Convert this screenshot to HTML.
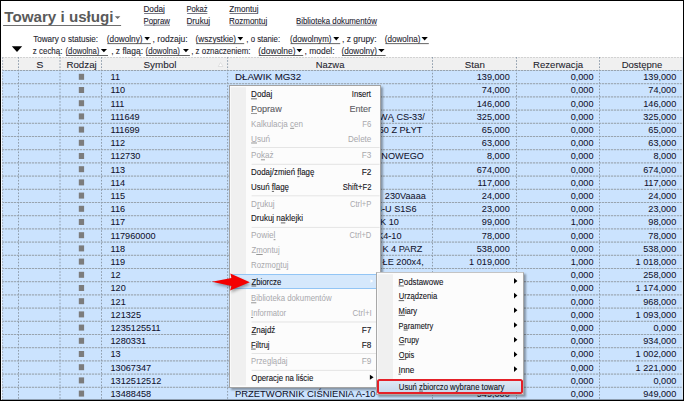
<!DOCTYPE html>
<html><head><meta charset="utf-8"><style>
html,body{margin:0;padding:0;}
body{width:684px;height:401px;overflow:hidden;position:relative;background:#fff;font-family:"Liberation Sans",sans-serif;}
.r{position:absolute;}
svg{overflow:visible}
</style></head><body>
<svg class="r" style="left:0;top:0" width="684" height="401" font-family="Liberation Sans, sans-serif"><text transform="translate(4.25,21.80) scale(0.9861,1)" font-size="15.40" fill="#5a5a5a" font-weight="bold">Towary i usługi</text><polygon points="114.8,16.2 120.4,16.2 117.6,19.0" fill="#6a6a6a"/><rect x="3.10" y="25.00" width="118.00" height="1.00" fill="#6e6e6e"/><text transform="translate(143.44,11.80) scale(0.9922,1)" font-size="8.30" fill="#1c1c30" stroke="#1c1c30" stroke-width="0.10">Dodaj</text><rect x="144.10" y="13.00" width="20.30" height="0.90" fill="#6a6a78"/><text transform="translate(143.47,23.50) scale(0.9413,1)" font-size="8.30" fill="#1c1c30" stroke="#1c1c30" stroke-width="0.10">Popraw</text><rect x="144.10" y="24.70" width="25.90" height="0.90" fill="#6a6a78"/><text transform="translate(186.49,11.80) scale(0.9184,1)" font-size="8.30" fill="#1c1c30" stroke="#1c1c30" stroke-width="0.10">Pokaż</text><rect x="187.10" y="13.00" width="20.20" height="0.90" fill="#6a6a78"/><text transform="translate(186.44,23.50) scale(0.9876,1)" font-size="8.30" fill="#1c1c30" stroke="#1c1c30" stroke-width="0.10">Drukuj</text><rect x="187.10" y="24.70" width="22.50" height="0.90" fill="#6a6a78"/><text transform="translate(229.36,11.80) scale(0.9735,1)" font-size="8.30" fill="#1c1c30" stroke="#1c1c30" stroke-width="0.10">Zmontuj</text><rect x="229.60" y="13.00" width="28.40" height="0.90" fill="#6a6a78"/><text transform="translate(228.96,23.50) scale(0.9670,1)" font-size="8.30" fill="#1c1c30" stroke="#1c1c30" stroke-width="0.10">Rozmontuj</text><rect x="229.60" y="24.70" width="37.20" height="0.90" fill="#6a6a78"/><text transform="translate(295.97,23.50) scale(0.9492,1)" font-size="8.30" fill="#1c1c30" stroke="#1c1c30" stroke-width="0.10">Biblioteka dokumentów</text><rect x="296.60" y="24.70" width="80.40" height="0.90" fill="#6a6a78"/><polygon points="11.8,46.2 22.2,46.2 17.0,51.9" fill="#000"/><text transform="translate(33.14,41.70) scale(0.9908,1)" font-size="8.20" fill="#262630" stroke="#262630" stroke-width="0.10">Towary o statusie:</text><text transform="translate(106.81,41.70) scale(1.0052,1)" font-size="8.20" fill="#262630" stroke="#262630" stroke-width="0.10">(dowolny)</text><polygon points="144.40,37.10 149.90,37.10 147.15,40.40" fill="#000"/><rect x="107.30" y="43.20" width="43.60" height="0.90" fill="#555"/><text transform="translate(152.53,41.70) scale(1.0457,1)" font-size="8.20" fill="#262630" stroke="#262630" stroke-width="0.10">, rodzaju:</text><text transform="translate(195.61,41.70)" font-size="8.20" fill="#262630" stroke="#262630" stroke-width="0.10">(wszystkie)</text><polygon points="237.50,37.10 243.20,37.10 240.35,40.40" fill="#000"/><rect x="196.10" y="43.20" width="48.10" height="0.90" fill="#555"/><text transform="translate(246.30,41.70) scale(0.9510,1)" font-size="8.20" fill="#262630" stroke="#262630" stroke-width="0.10">, o stanie:</text><text transform="translate(290.02,41.70) scale(0.9790,1)" font-size="8.20" fill="#262630" stroke="#262630" stroke-width="0.10">(dowolnym)</text><polygon points="333.30,37.10 339.20,37.10 336.25,40.40" fill="#000"/><rect x="290.50" y="43.20" width="49.70" height="0.90" fill="#555"/><text transform="translate(341.94,41.70) scale(1.0302,1)" font-size="8.20" fill="#262630" stroke="#262630" stroke-width="0.10">, z grupy:</text><text transform="translate(384.81,41.70) scale(0.9882,1)" font-size="8.20" fill="#262630" stroke="#262630" stroke-width="0.10">(dowolna)</text><polygon points="421.50,37.10 427.80,37.10 424.65,40.40" fill="#000"/><rect x="385.30" y="43.20" width="43.50" height="0.90" fill="#555"/><text transform="translate(32.78,53.60) scale(0.9715,1)" font-size="8.20" fill="#262630" stroke="#262630" stroke-width="0.10">z cechą:</text><text transform="translate(65.54,53.60) scale(0.9425,1)" font-size="8.20" fill="#262630" stroke="#262630" stroke-width="0.10">(dowolna)</text><polygon points="100.80,49.00 107.00,49.00 103.90,52.30" fill="#000"/><rect x="66.00" y="55.10" width="42.00" height="0.90" fill="#555"/><text transform="translate(111.14,53.60) scale(1.0312,1)" font-size="8.20" fill="#262630" stroke="#262630" stroke-width="0.10">, z flagą:</text><text transform="translate(145.53,53.60) scale(0.9539,1)" font-size="8.20" fill="#262630" stroke="#262630" stroke-width="0.10">(dowolna)</text><polygon points="183.00,49.00 188.90,49.00 185.95,52.30" fill="#000"/><rect x="146.00" y="55.10" width="43.90" height="0.90" fill="#555"/><text transform="translate(191.19,53.60) scale(0.9663,1)" font-size="8.20" fill="#262630" stroke="#262630" stroke-width="0.10">, z oznaczeniem:</text><text transform="translate(258.29,53.60) scale(1.0339,1)" font-size="8.20" fill="#262630" stroke="#262630" stroke-width="0.10">(dowolne)</text><polygon points="296.50,49.00 302.20,49.00 299.35,52.30" fill="#000"/><rect x="258.80" y="55.10" width="44.40" height="0.90" fill="#555"/><text transform="translate(304.54,53.60) scale(1.0298,1)" font-size="8.20" fill="#262630" stroke="#262630" stroke-width="0.10">, model:</text><text transform="translate(341.51,53.60) scale(0.9965,1)" font-size="8.20" fill="#262630" stroke="#262630" stroke-width="0.10">(dowolny)</text><polygon points="378.20,49.00 384.60,49.00 381.40,52.30" fill="#000"/><rect x="342.00" y="55.10" width="43.60" height="0.90" fill="#555"/><rect x="1.60" y="57.00" width="681.40" height="13.50" fill="#f0f0f0"/><rect x="1.60" y="70.50" width="681.40" height="330.00" fill="#cbe3fe"/><line x1="2" y1="57.5" x2="683" y2="57.5" stroke="#d2d2d2" stroke-dasharray="2 1"/><line x1="2" y1="70.50" x2="683" y2="70.50" stroke="#c0d3e6"/><line x1="2" y1="70.50" x2="683" y2="70.50" stroke="#98a4b0" stroke-dasharray="2 1"/><line x1="2" y1="83.70" x2="683" y2="83.70" stroke="#c0d3e6"/><line x1="2" y1="83.70" x2="683" y2="83.70" stroke="#98a4b0" stroke-dasharray="2 1"/><line x1="2" y1="96.90" x2="683" y2="96.90" stroke="#c0d3e6"/><line x1="2" y1="96.90" x2="683" y2="96.90" stroke="#98a4b0" stroke-dasharray="2 1"/><line x1="2" y1="110.10" x2="683" y2="110.10" stroke="#c0d3e6"/><line x1="2" y1="110.10" x2="683" y2="110.10" stroke="#98a4b0" stroke-dasharray="2 1"/><line x1="2" y1="123.30" x2="683" y2="123.30" stroke="#c0d3e6"/><line x1="2" y1="123.30" x2="683" y2="123.30" stroke="#98a4b0" stroke-dasharray="2 1"/><line x1="2" y1="136.50" x2="683" y2="136.50" stroke="#c0d3e6"/><line x1="2" y1="136.50" x2="683" y2="136.50" stroke="#98a4b0" stroke-dasharray="2 1"/><line x1="2" y1="149.70" x2="683" y2="149.70" stroke="#c0d3e6"/><line x1="2" y1="149.70" x2="683" y2="149.70" stroke="#98a4b0" stroke-dasharray="2 1"/><line x1="2" y1="162.90" x2="683" y2="162.90" stroke="#c0d3e6"/><line x1="2" y1="162.90" x2="683" y2="162.90" stroke="#98a4b0" stroke-dasharray="2 1"/><line x1="2" y1="176.10" x2="683" y2="176.10" stroke="#c0d3e6"/><line x1="2" y1="176.10" x2="683" y2="176.10" stroke="#98a4b0" stroke-dasharray="2 1"/><line x1="2" y1="189.30" x2="683" y2="189.30" stroke="#c0d3e6"/><line x1="2" y1="189.30" x2="683" y2="189.30" stroke="#98a4b0" stroke-dasharray="2 1"/><line x1="2" y1="202.50" x2="683" y2="202.50" stroke="#c0d3e6"/><line x1="2" y1="202.50" x2="683" y2="202.50" stroke="#98a4b0" stroke-dasharray="2 1"/><line x1="2" y1="215.70" x2="683" y2="215.70" stroke="#c0d3e6"/><line x1="2" y1="215.70" x2="683" y2="215.70" stroke="#98a4b0" stroke-dasharray="2 1"/><line x1="2" y1="228.90" x2="683" y2="228.90" stroke="#c0d3e6"/><line x1="2" y1="228.90" x2="683" y2="228.90" stroke="#98a4b0" stroke-dasharray="2 1"/><line x1="2" y1="242.10" x2="683" y2="242.10" stroke="#c0d3e6"/><line x1="2" y1="242.10" x2="683" y2="242.10" stroke="#98a4b0" stroke-dasharray="2 1"/><line x1="2" y1="255.30" x2="683" y2="255.30" stroke="#c0d3e6"/><line x1="2" y1="255.30" x2="683" y2="255.30" stroke="#98a4b0" stroke-dasharray="2 1"/><line x1="2" y1="268.50" x2="683" y2="268.50" stroke="#c0d3e6"/><line x1="2" y1="268.50" x2="683" y2="268.50" stroke="#98a4b0" stroke-dasharray="2 1"/><line x1="2" y1="281.70" x2="683" y2="281.70" stroke="#c0d3e6"/><line x1="2" y1="281.70" x2="683" y2="281.70" stroke="#98a4b0" stroke-dasharray="2 1"/><line x1="2" y1="294.90" x2="683" y2="294.90" stroke="#c0d3e6"/><line x1="2" y1="294.90" x2="683" y2="294.90" stroke="#98a4b0" stroke-dasharray="2 1"/><line x1="2" y1="308.10" x2="683" y2="308.10" stroke="#c0d3e6"/><line x1="2" y1="308.10" x2="683" y2="308.10" stroke="#98a4b0" stroke-dasharray="2 1"/><line x1="2" y1="321.30" x2="683" y2="321.30" stroke="#c0d3e6"/><line x1="2" y1="321.30" x2="683" y2="321.30" stroke="#98a4b0" stroke-dasharray="2 1"/><line x1="2" y1="334.50" x2="683" y2="334.50" stroke="#c0d3e6"/><line x1="2" y1="334.50" x2="683" y2="334.50" stroke="#98a4b0" stroke-dasharray="2 1"/><line x1="2" y1="347.70" x2="683" y2="347.70" stroke="#c0d3e6"/><line x1="2" y1="347.70" x2="683" y2="347.70" stroke="#98a4b0" stroke-dasharray="2 1"/><line x1="2" y1="360.90" x2="683" y2="360.90" stroke="#c0d3e6"/><line x1="2" y1="360.90" x2="683" y2="360.90" stroke="#98a4b0" stroke-dasharray="2 1"/><line x1="2" y1="374.10" x2="683" y2="374.10" stroke="#c0d3e6"/><line x1="2" y1="374.10" x2="683" y2="374.10" stroke="#98a4b0" stroke-dasharray="2 1"/><line x1="2" y1="387.30" x2="683" y2="387.30" stroke="#c0d3e6"/><line x1="2" y1="387.30" x2="683" y2="387.30" stroke="#98a4b0" stroke-dasharray="2 1"/><line x1="2" y1="400.50" x2="683" y2="400.50" stroke="#c0d3e6"/><line x1="2" y1="400.50" x2="683" y2="400.50" stroke="#98a4b0" stroke-dasharray="2 1"/><line x1="18.50" y1="57" x2="18.50" y2="401" stroke="#8e9cab" stroke-dasharray="1.6 1.55"/><line x1="60.00" y1="57" x2="60.00" y2="401" stroke="#8e9cab" stroke-dasharray="1.6 1.55"/><line x1="101.50" y1="57" x2="101.50" y2="401" stroke="#8e9cab" stroke-dasharray="1.6 1.55"/><line x1="227.60" y1="57" x2="227.60" y2="401" stroke="#8e9cab" stroke-dasharray="1.6 1.55"/><line x1="432.50" y1="57" x2="432.50" y2="401" stroke="#8e9cab" stroke-dasharray="1.6 1.55"/><line x1="516.50" y1="57" x2="516.50" y2="401" stroke="#8e9cab" stroke-dasharray="1.6 1.55"/><line x1="599.50" y1="57" x2="599.50" y2="401" stroke="#8e9cab" stroke-dasharray="1.6 1.55"/><line x1="2.6" y1="57" x2="2.6" y2="401" stroke="#b0b8c4" stroke-dasharray="2 1"/><line x1="682.3" y1="57" x2="682.3" y2="401" stroke="#e0e8f0"/><text transform="translate(36.31,67.60) scale(1.1003,1)" font-size="9.80" fill="#1e1e2e" stroke="#1e1e2e" stroke-width="0.08">S</text><text transform="translate(66.42,67.60) scale(0.9946,1)" font-size="9.80" fill="#1e1e2e" stroke="#1e1e2e" stroke-width="0.08">Rodzaj</text><text transform="translate(143.45,67.60) scale(1.0109,1)" font-size="9.80" fill="#1e1e2e" stroke="#1e1e2e" stroke-width="0.08">Symbol</text><text transform="translate(315.65,67.60) scale(0.9604,1)" font-size="9.80" fill="#1e1e2e" stroke="#1e1e2e" stroke-width="0.08">Nazwa</text><text transform="translate(464.76,67.60) scale(0.9968,1)" font-size="9.80" fill="#1e1e2e" stroke="#1e1e2e" stroke-width="0.08">Stan</text><text transform="translate(533.03,67.60) scale(0.9798,1)" font-size="9.80" fill="#1e1e2e" stroke="#1e1e2e" stroke-width="0.08">Rezerwacja</text><text transform="translate(621.64,67.60) scale(0.9725,1)" font-size="9.80" fill="#1e1e2e" stroke="#1e1e2e" stroke-width="0.08">Dostępne</text><polygon points="218.3,66.5 222.9,66.5 220.6,62.6" fill="#fff" stroke="#c8c8c8" stroke-width="0.5"/><rect x="78.80" y="73.80" width="5.30" height="6.00" fill="#7c7c7c"/><text transform="translate(110.51,80.20) scale(0.9337,1)" font-size="9.80" fill="#10102a" stroke="#10102a" stroke-width="0.04">11</text><text transform="translate(234.92,80.20) scale(0.9967,1)" font-size="9.80" fill="#10102a" stroke="#10102a" stroke-width="0.04">DŁAWIK MG32</text><text transform="translate(476.74,80.20) scale(0.9337,1)" font-size="9.80" fill="#10102a" stroke="#10102a" stroke-width="0.04">139,000</text><text transform="translate(570.65,80.20) scale(0.9337,1)" font-size="9.80" fill="#10102a" stroke="#10102a" stroke-width="0.04">0,000</text><text transform="translate(643.24,80.20) scale(0.9337,1)" font-size="9.80" fill="#10102a" stroke="#10102a" stroke-width="0.04">139,000</text><rect x="78.80" y="87.00" width="5.30" height="6.00" fill="#7c7c7c"/><text transform="translate(110.51,93.40) scale(0.9337,1)" font-size="9.80" fill="#10102a" stroke="#10102a" stroke-width="0.04">110</text><text transform="translate(481.82,93.40) scale(0.9337,1)" font-size="9.80" fill="#10102a" stroke="#10102a" stroke-width="0.04">74,000</text><text transform="translate(570.65,93.40) scale(0.9337,1)" font-size="9.80" fill="#10102a" stroke="#10102a" stroke-width="0.04">0,000</text><text transform="translate(648.32,93.40) scale(0.9337,1)" font-size="9.80" fill="#10102a" stroke="#10102a" stroke-width="0.04">74,000</text><rect x="78.80" y="100.20" width="5.30" height="6.00" fill="#7c7c7c"/><text transform="translate(110.51,106.60) scale(0.9337,1)" font-size="9.80" fill="#10102a" stroke="#10102a" stroke-width="0.04">111</text><text transform="translate(476.74,106.60) scale(0.9337,1)" font-size="9.80" fill="#10102a" stroke="#10102a" stroke-width="0.04">146,000</text><text transform="translate(570.65,106.60) scale(0.9337,1)" font-size="9.80" fill="#10102a" stroke="#10102a" stroke-width="0.04">0,000</text><text transform="translate(643.24,106.60) scale(0.9337,1)" font-size="9.80" fill="#10102a" stroke="#10102a" stroke-width="0.04">146,000</text><rect x="78.80" y="113.40" width="5.30" height="6.00" fill="#7c7c7c"/><text transform="translate(110.51,119.80) scale(0.9337,1)" font-size="9.80" fill="#10102a" stroke="#10102a" stroke-width="0.04">111649</text><text transform="translate(372.01,119.80) scale(0.9337,1)" font-size="9.80" fill="#10102a" stroke="#10102a" stroke-width="0.04">OWĄ CS-33/</text><text transform="translate(476.74,119.80) scale(0.9337,1)" font-size="9.80" fill="#10102a" stroke="#10102a" stroke-width="0.04">325,000</text><text transform="translate(570.65,119.80) scale(0.9337,1)" font-size="9.80" fill="#10102a" stroke="#10102a" stroke-width="0.04">0,000</text><text transform="translate(643.24,119.80) scale(0.9337,1)" font-size="9.80" fill="#10102a" stroke="#10102a" stroke-width="0.04">325,000</text><rect x="78.80" y="126.60" width="5.30" height="6.00" fill="#7c7c7c"/><text transform="translate(110.51,133.00) scale(0.9337,1)" font-size="9.80" fill="#10102a" stroke="#10102a" stroke-width="0.04">111699</text><text transform="translate(373.67,133.00) scale(0.9337,1)" font-size="9.80" fill="#10102a" stroke="#10102a" stroke-width="0.04">250 Z PŁYT</text><text transform="translate(481.82,133.00) scale(0.9337,1)" font-size="9.80" fill="#10102a" stroke="#10102a" stroke-width="0.04">65,000</text><text transform="translate(570.65,133.00) scale(0.9337,1)" font-size="9.80" fill="#10102a" stroke="#10102a" stroke-width="0.04">0,000</text><text transform="translate(648.32,133.00) scale(0.9337,1)" font-size="9.80" fill="#10102a" stroke="#10102a" stroke-width="0.04">65,000</text><rect x="78.80" y="139.80" width="5.30" height="6.00" fill="#7c7c7c"/><text transform="translate(110.51,146.20) scale(0.9337,1)" font-size="9.80" fill="#10102a" stroke="#10102a" stroke-width="0.04">112</text><text transform="translate(481.82,146.20) scale(0.9337,1)" font-size="9.80" fill="#10102a" stroke="#10102a" stroke-width="0.04">63,000</text><text transform="translate(570.65,146.20) scale(0.9337,1)" font-size="9.80" fill="#10102a" stroke="#10102a" stroke-width="0.04">0,000</text><text transform="translate(648.32,146.20) scale(0.9337,1)" font-size="9.80" fill="#10102a" stroke="#10102a" stroke-width="0.04">63,000</text><rect x="78.80" y="153.00" width="5.30" height="6.00" fill="#7c7c7c"/><text transform="translate(110.51,159.40) scale(0.9337,1)" font-size="9.80" fill="#10102a" stroke="#10102a" stroke-width="0.04">112730</text><text transform="translate(381.33,159.40) scale(0.9337,1)" font-size="9.80" fill="#10102a" stroke="#10102a" stroke-width="0.04">NOWEGO</text><text transform="translate(486.95,159.40) scale(0.9337,1)" font-size="9.80" fill="#10102a" stroke="#10102a" stroke-width="0.04">8,000</text><text transform="translate(570.65,159.40) scale(0.9337,1)" font-size="9.80" fill="#10102a" stroke="#10102a" stroke-width="0.04">0,000</text><text transform="translate(653.45,159.40) scale(0.9337,1)" font-size="9.80" fill="#10102a" stroke="#10102a" stroke-width="0.04">8,000</text><rect x="78.80" y="166.20" width="5.30" height="6.00" fill="#7c7c7c"/><text transform="translate(110.51,172.60) scale(0.9337,1)" font-size="9.80" fill="#10102a" stroke="#10102a" stroke-width="0.04">113</text><text transform="translate(476.74,172.60) scale(0.9337,1)" font-size="9.80" fill="#10102a" stroke="#10102a" stroke-width="0.04">674,000</text><text transform="translate(570.65,172.60) scale(0.9337,1)" font-size="9.80" fill="#10102a" stroke="#10102a" stroke-width="0.04">0,000</text><text transform="translate(643.24,172.60) scale(0.9337,1)" font-size="9.80" fill="#10102a" stroke="#10102a" stroke-width="0.04">674,000</text><rect x="78.80" y="179.40" width="5.30" height="6.00" fill="#7c7c7c"/><text transform="translate(110.51,185.80) scale(0.9337,1)" font-size="9.80" fill="#10102a" stroke="#10102a" stroke-width="0.04">114</text><text transform="translate(477.43,185.80) scale(0.9337,1)" font-size="9.80" fill="#10102a" stroke="#10102a" stroke-width="0.04">117,000</text><text transform="translate(570.65,185.80) scale(0.9337,1)" font-size="9.80" fill="#10102a" stroke="#10102a" stroke-width="0.04">0,000</text><text transform="translate(643.93,185.80) scale(0.9337,1)" font-size="9.80" fill="#10102a" stroke="#10102a" stroke-width="0.04">117,000</text><rect x="78.80" y="192.60" width="5.30" height="6.00" fill="#7c7c7c"/><text transform="translate(110.51,199.00) scale(0.9337,1)" font-size="9.80" fill="#10102a" stroke="#10102a" stroke-width="0.04">115</text><text transform="translate(384.86,199.00) scale(0.9337,1)" font-size="9.80" fill="#10102a" stroke="#10102a" stroke-width="0.04">230Vaaaa</text><text transform="translate(481.82,199.00) scale(0.9337,1)" font-size="9.80" fill="#10102a" stroke="#10102a" stroke-width="0.04">24,000</text><text transform="translate(570.65,199.00) scale(0.9337,1)" font-size="9.80" fill="#10102a" stroke="#10102a" stroke-width="0.04">0,000</text><text transform="translate(648.32,199.00) scale(0.9337,1)" font-size="9.80" fill="#10102a" stroke="#10102a" stroke-width="0.04">24,000</text><rect x="78.80" y="205.80" width="5.30" height="6.00" fill="#7c7c7c"/><text transform="translate(110.51,212.20) scale(0.9337,1)" font-size="9.80" fill="#10102a" stroke="#10102a" stroke-width="0.04">116</text><text transform="translate(376.90,212.20) scale(0.9337,1)" font-size="9.80" fill="#10102a" stroke="#10102a" stroke-width="0.04">4-U S1S6</text><text transform="translate(481.82,212.20) scale(0.9337,1)" font-size="9.80" fill="#10102a" stroke="#10102a" stroke-width="0.04">23,000</text><text transform="translate(570.65,212.20) scale(0.9337,1)" font-size="9.80" fill="#10102a" stroke="#10102a" stroke-width="0.04">0,000</text><text transform="translate(648.32,212.20) scale(0.9337,1)" font-size="9.80" fill="#10102a" stroke="#10102a" stroke-width="0.04">23,000</text><rect x="78.80" y="219.00" width="5.30" height="6.00" fill="#7c7c7c"/><text transform="translate(110.51,225.40) scale(0.9337,1)" font-size="9.80" fill="#10102a" stroke="#10102a" stroke-width="0.04">117</text><text transform="translate(380.12,225.40) scale(0.9337,1)" font-size="9.80" fill="#10102a" stroke="#10102a" stroke-width="0.04">K 10</text><text transform="translate(481.82,225.40) scale(0.9337,1)" font-size="9.80" fill="#10102a" stroke="#10102a" stroke-width="0.04">99,000</text><text transform="translate(570.65,225.40) scale(0.9337,1)" font-size="9.80" fill="#10102a" stroke="#10102a" stroke-width="0.04">1,000</text><text transform="translate(648.32,225.40) scale(0.9337,1)" font-size="9.80" fill="#10102a" stroke="#10102a" stroke-width="0.04">98,000</text><rect x="78.80" y="232.20" width="5.30" height="6.00" fill="#7c7c7c"/><text transform="translate(110.51,238.60) scale(0.9337,1)" font-size="9.80" fill="#10102a" stroke="#10102a" stroke-width="0.04">117960000</text><text transform="translate(377.14,238.60) scale(0.9337,1)" font-size="9.80" fill="#10102a" stroke="#10102a" stroke-width="0.04">K4-10</text><text transform="translate(481.82,238.60) scale(0.9337,1)" font-size="9.80" fill="#10102a" stroke="#10102a" stroke-width="0.04">78,000</text><text transform="translate(570.65,238.60) scale(0.9337,1)" font-size="9.80" fill="#10102a" stroke="#10102a" stroke-width="0.04">0,000</text><text transform="translate(648.32,238.60) scale(0.9337,1)" font-size="9.80" fill="#10102a" stroke="#10102a" stroke-width="0.04">78,000</text><rect x="78.80" y="245.40" width="5.30" height="6.00" fill="#7c7c7c"/><text transform="translate(110.51,251.80) scale(0.9337,1)" font-size="9.80" fill="#10102a" stroke="#10102a" stroke-width="0.04">118</text><text transform="translate(382.39,251.80) scale(0.9337,1)" font-size="9.80" fill="#10102a" stroke="#10102a" stroke-width="0.04">K 4 PARZ</text><text transform="translate(476.74,251.80) scale(0.9337,1)" font-size="9.80" fill="#10102a" stroke="#10102a" stroke-width="0.04">538,000</text><text transform="translate(570.65,251.80) scale(0.9337,1)" font-size="9.80" fill="#10102a" stroke="#10102a" stroke-width="0.04">0,000</text><text transform="translate(643.24,251.80) scale(0.9337,1)" font-size="9.80" fill="#10102a" stroke="#10102a" stroke-width="0.04">538,000</text><rect x="78.80" y="258.60" width="5.30" height="6.00" fill="#7c7c7c"/><text transform="translate(110.51,265.00) scale(0.9337,1)" font-size="9.80" fill="#10102a" stroke="#10102a" stroke-width="0.04">119</text><text transform="translate(382.60,265.00) scale(0.9337,1)" font-size="9.80" fill="#10102a" stroke="#10102a" stroke-width="0.04">ŁE 200x4,</text><text transform="translate(469.10,265.00) scale(0.9337,1)" font-size="9.80" fill="#10102a" stroke="#10102a" stroke-width="0.04">1 019,000</text><text transform="translate(570.65,265.00) scale(0.9337,1)" font-size="9.80" fill="#10102a" stroke="#10102a" stroke-width="0.04">1,000</text><text transform="translate(635.60,265.00) scale(0.9337,1)" font-size="9.80" fill="#10102a" stroke="#10102a" stroke-width="0.04">1 018,000</text><rect x="78.80" y="271.80" width="5.30" height="6.00" fill="#7c7c7c"/><text transform="translate(110.51,278.20) scale(0.9337,1)" font-size="9.80" fill="#10102a" stroke="#10102a" stroke-width="0.04">12</text><text transform="translate(476.74,278.20) scale(0.9337,1)" font-size="9.80" fill="#10102a" stroke="#10102a" stroke-width="0.04">258,000</text><text transform="translate(570.65,278.20) scale(0.9337,1)" font-size="9.80" fill="#10102a" stroke="#10102a" stroke-width="0.04">0,000</text><text transform="translate(643.24,278.20) scale(0.9337,1)" font-size="9.80" fill="#10102a" stroke="#10102a" stroke-width="0.04">258,000</text><rect x="78.80" y="285.00" width="5.30" height="6.00" fill="#7c7c7c"/><text transform="translate(110.51,291.40) scale(0.9337,1)" font-size="9.80" fill="#10102a" stroke="#10102a" stroke-width="0.04">120</text><text transform="translate(469.10,291.40) scale(0.9337,1)" font-size="9.80" fill="#10102a" stroke="#10102a" stroke-width="0.04">1 174,000</text><text transform="translate(570.65,291.40) scale(0.9337,1)" font-size="9.80" fill="#10102a" stroke="#10102a" stroke-width="0.04">0,000</text><text transform="translate(635.60,291.40) scale(0.9337,1)" font-size="9.80" fill="#10102a" stroke="#10102a" stroke-width="0.04">1 174,000</text><rect x="78.80" y="298.20" width="5.30" height="6.00" fill="#7c7c7c"/><text transform="translate(110.51,304.60) scale(0.9337,1)" font-size="9.80" fill="#10102a" stroke="#10102a" stroke-width="0.04">121</text><text transform="translate(476.74,304.60) scale(0.9337,1)" font-size="9.80" fill="#10102a" stroke="#10102a" stroke-width="0.04">968,000</text><text transform="translate(570.65,304.60) scale(0.9337,1)" font-size="9.80" fill="#10102a" stroke="#10102a" stroke-width="0.04">0,000</text><text transform="translate(643.24,304.60) scale(0.9337,1)" font-size="9.80" fill="#10102a" stroke="#10102a" stroke-width="0.04">968,000</text><rect x="78.80" y="311.40" width="5.30" height="6.00" fill="#7c7c7c"/><text transform="translate(110.51,317.80) scale(0.9337,1)" font-size="9.80" fill="#10102a" stroke="#10102a" stroke-width="0.04">121325</text><text transform="translate(469.10,317.80) scale(0.9337,1)" font-size="9.80" fill="#10102a" stroke="#10102a" stroke-width="0.04">1 093,000</text><text transform="translate(570.65,317.80) scale(0.9337,1)" font-size="9.80" fill="#10102a" stroke="#10102a" stroke-width="0.04">0,000</text><text transform="translate(635.60,317.80) scale(0.9337,1)" font-size="9.80" fill="#10102a" stroke="#10102a" stroke-width="0.04">1 093,000</text><rect x="78.80" y="324.60" width="5.30" height="6.00" fill="#7c7c7c"/><text transform="translate(110.51,331.00) scale(0.9337,1)" font-size="9.80" fill="#10102a" stroke="#10102a" stroke-width="0.04">1235125511</text><text transform="translate(486.95,331.00) scale(0.9337,1)" font-size="9.80" fill="#10102a" stroke="#10102a" stroke-width="0.04">0,000</text><text transform="translate(570.65,331.00) scale(0.9337,1)" font-size="9.80" fill="#10102a" stroke="#10102a" stroke-width="0.04">0,000</text><text transform="translate(653.45,331.00) scale(0.9337,1)" font-size="9.80" fill="#10102a" stroke="#10102a" stroke-width="0.04">0,000</text><rect x="78.80" y="337.80" width="5.30" height="6.00" fill="#7c7c7c"/><text transform="translate(110.51,344.20) scale(0.9337,1)" font-size="9.80" fill="#10102a" stroke="#10102a" stroke-width="0.04">1280331</text><text transform="translate(476.74,344.20) scale(0.9337,1)" font-size="9.80" fill="#10102a" stroke="#10102a" stroke-width="0.04">934,000</text><text transform="translate(570.65,344.20) scale(0.9337,1)" font-size="9.80" fill="#10102a" stroke="#10102a" stroke-width="0.04">0,000</text><text transform="translate(643.24,344.20) scale(0.9337,1)" font-size="9.80" fill="#10102a" stroke="#10102a" stroke-width="0.04">934,000</text><rect x="78.80" y="351.00" width="5.30" height="6.00" fill="#7c7c7c"/><text transform="translate(110.51,357.40) scale(0.9337,1)" font-size="9.80" fill="#10102a" stroke="#10102a" stroke-width="0.04">13</text><text transform="translate(469.10,357.40) scale(0.9337,1)" font-size="9.80" fill="#10102a" stroke="#10102a" stroke-width="0.04">1 002,000</text><text transform="translate(570.65,357.40) scale(0.9337,1)" font-size="9.80" fill="#10102a" stroke="#10102a" stroke-width="0.04">0,000</text><text transform="translate(635.60,357.40) scale(0.9337,1)" font-size="9.80" fill="#10102a" stroke="#10102a" stroke-width="0.04">1 002,000</text><rect x="78.80" y="364.20" width="5.30" height="6.00" fill="#7c7c7c"/><text transform="translate(110.51,370.60) scale(0.9337,1)" font-size="9.80" fill="#10102a" stroke="#10102a" stroke-width="0.04">13067347</text><text transform="translate(469.10,370.60) scale(0.9337,1)" font-size="9.80" fill="#10102a" stroke="#10102a" stroke-width="0.04">1 221,000</text><text transform="translate(570.65,370.60) scale(0.9337,1)" font-size="9.80" fill="#10102a" stroke="#10102a" stroke-width="0.04">0,000</text><text transform="translate(635.60,370.60) scale(0.9337,1)" font-size="9.80" fill="#10102a" stroke="#10102a" stroke-width="0.04">1 221,000</text><rect x="78.80" y="377.40" width="5.30" height="6.00" fill="#7c7c7c"/><text transform="translate(110.51,383.80) scale(0.9337,1)" font-size="9.80" fill="#10102a" stroke="#10102a" stroke-width="0.04">1312512512</text><text transform="translate(486.95,383.80) scale(0.9337,1)" font-size="9.80" fill="#10102a" stroke="#10102a" stroke-width="0.04">0,000</text><text transform="translate(570.65,383.80) scale(0.9337,1)" font-size="9.80" fill="#10102a" stroke="#10102a" stroke-width="0.04">0,000</text><text transform="translate(653.45,383.80) scale(0.9337,1)" font-size="9.80" fill="#10102a" stroke="#10102a" stroke-width="0.04">0,000</text><rect x="78.80" y="390.60" width="5.30" height="6.00" fill="#7c7c7c"/><text transform="translate(110.51,397.00) scale(0.9337,1)" font-size="9.80" fill="#10102a" stroke="#10102a" stroke-width="0.04">13488458</text><text transform="translate(234.95,397.00) scale(0.9612,1)" font-size="9.80" fill="#10102a" stroke="#10102a" stroke-width="0.04">PRZETWORNIK CIŚNIENIA A-10</text><text transform="translate(476.74,397.00) scale(0.9337,1)" font-size="9.80" fill="#10102a" stroke="#10102a" stroke-width="0.04">949,000</text><text transform="translate(570.65,397.00) scale(0.9337,1)" font-size="9.80" fill="#10102a" stroke="#10102a" stroke-width="0.04">0,000</text><text transform="translate(643.24,397.00) scale(0.9337,1)" font-size="9.80" fill="#10102a" stroke="#10102a" stroke-width="0.04">949,000</text><rect x="0.00" y="0.00" width="684.00" height="1.00" fill="#000"/><rect x="0.00" y="0.00" width="1.00" height="401.00" fill="#000"/><rect x="683.00" y="0.00" width="1.00" height="401.00" fill="#000"/><rect x="0.00" y="399.70" width="684.00" height="1.30" fill="#000"/><rect x="1.00" y="1.00" width="0.60" height="399.00" fill="#fff"/></svg>
<div class="r" style="left:229px;top:85px;width:150px;height:301px;border:1px solid #a3a3a3;background:#fcfcfc;box-shadow:1.5px 1.5px 2px rgba(0,0,0,0.35);"></div>
<svg class="r" style="left:0;top:0" width="684" height="401" font-family="Liberation Sans, sans-serif"><rect x="230.80" y="87.20" width="15.20" height="298.30" fill="#f0f0f0"/><text transform="translate(251.05,97.41) scale(0.9659,1)" font-size="8.40" fill="#141420" stroke="#141420" stroke-width="0.10">Dodaj</text><rect x="251.05" y="98.41" width="5.86" height="0.90" fill="#555"/><text transform="translate(351.81,97.41) scale(0.8945,1)" font-size="8.60" fill="#141420" stroke="#141420" stroke-width="0.10">Insert</text><text transform="translate(250.97,112.12) scale(1.0809,1)" font-size="8.40" fill="#5c5c64" stroke="#5c5c64" stroke-width="0.10">Popraw</text><rect x="250.97" y="113.12" width="6.06" height="0.90" fill="#8a8a8a"/><text transform="translate(349.47,112.12) scale(1.0562,1)" font-size="8.60" fill="#5c5c64" stroke="#5c5c64" stroke-width="0.10">Enter</text><text transform="translate(251.05,126.83) scale(0.9618,1)" font-size="8.40" fill="#a8a8ac">Kalkulacja cen</text><rect x="290.13" y="127.83" width="4.04" height="0.90" fill="#8a8a8a"/><text transform="translate(362.28,126.83) scale(0.9013,1)" font-size="8.60" fill="#a8a8ac">F6</text><text transform="translate(251.09,141.54) scale(0.9740,1)" font-size="8.40" fill="#a8a8ac">Usuń</text><rect x="251.09" y="142.54" width="5.91" height="0.90" fill="#8a8a8a"/><text transform="translate(348.05,141.54) scale(0.9378,1)" font-size="8.60" fill="#a8a8ac">Delete</text><rect x="251.60" y="147.00" width="128.00" height="0.90" fill="#e2e2e2"/><text transform="translate(251.05,158.37) scale(0.9614,1)" font-size="8.40" fill="#a8a8ac">Pokaż</text><rect x="260.93" y="159.37" width="4.04" height="0.90" fill="#8a8a8a"/><text transform="translate(361.74,158.37) scale(0.9569,1)" font-size="8.60" fill="#a8a8ac">F3</text><rect x="251.60" y="163.83" width="128.00" height="0.90" fill="#e2e2e2"/><text transform="translate(251.07,175.20) scale(0.9427,1)" font-size="8.40" fill="#141420" stroke="#141420" stroke-width="0.10">Dodaj/zmień flagę</text><rect x="297.28" y="176.20" width="2.20" height="0.90" fill="#555"/><text transform="translate(361.74,175.20) scale(0.9662,1)" font-size="8.60" fill="#141420" stroke="#141420" stroke-width="0.10">F2</text><text transform="translate(251.10,189.91) scale(0.9452,1)" font-size="8.40" fill="#141420" stroke="#141420" stroke-width="0.10">Usuń flagę</text><rect x="271.85" y="190.91" width="2.21" height="0.90" fill="#555"/><text transform="translate(342.66,189.91) scale(0.8908,1)" font-size="8.60" fill="#141420" stroke="#141420" stroke-width="0.10">Shift+F2</text><rect x="251.60" y="195.37" width="128.00" height="0.90" fill="#e2e2e2"/><text transform="translate(251.04,206.74) scale(0.9758,1)" font-size="8.40" fill="#a8a8ac">Drukuj</text><rect x="256.96" y="207.74" width="2.73" height="0.90" fill="#8a8a8a"/><text transform="translate(350.02,206.74) scale(0.8855,1)" font-size="8.60" fill="#a8a8ac">Ctrl+P</text><text transform="translate(251.06,221.45) scale(0.9535,1)" font-size="8.40" fill="#141420" stroke="#141420" stroke-width="0.10">Drukuj naklejki</text><rect x="280.88" y="222.45" width="4.45" height="0.90" fill="#555"/><rect x="251.60" y="226.91" width="128.00" height="0.90" fill="#e2e2e2"/><text transform="translate(251.04,238.28) scale(0.9864,1)" font-size="8.40" fill="#a8a8ac">Powiel</text><rect x="273.61" y="239.28" width="1.84" height="0.90" fill="#8a8a8a"/><text transform="translate(349.62,238.28) scale(0.8831,1)" font-size="8.60" fill="#a8a8ac">Ctrl+D</text><text transform="translate(251.47,252.99) scale(0.9280,1)" font-size="8.40" fill="#a8a8ac">Zmontuj</text><rect x="256.23" y="253.99" width="6.49" height="0.90" fill="#8a8a8a"/><text transform="translate(251.07,267.70) scale(0.9349,1)" font-size="8.40" fill="#a8a8ac">Rozmontuj</text><rect x="275.95" y="268.70" width="4.37" height="0.90" fill="#8a8a8a"/></svg>
<div class="r" style="left:231px;top:274.13px;width:147px;height:12.9px;border:1.5px solid #92c5f5;border-radius:2px;background:#d5e8fc;"></div>
<svg class="r" style="left:0;top:0" width="684" height="401" font-family="Liberation Sans, sans-serif"><polygon points="370.5,279.13 373.4,280.93 370.5,282.73" fill="#fff"/><text transform="translate(251.47,284.53) scale(0.9245,1)" font-size="8.40" fill="#141420" stroke="#141420" stroke-width="0.10">Zbiorcze</text><rect x="251.47" y="285.53" width="4.74" height="0.90" fill="#555"/><text transform="translate(251.07,301.36) scale(0.9332,1)" font-size="8.40" fill="#a8a8ac">Biblioteka dokumentów</text><rect x="251.07" y="302.36" width="5.23" height="0.90" fill="#8a8a8a"/><text transform="translate(251.01,316.07) scale(0.9149,1)" font-size="8.40" fill="#a8a8ac">Informator</text><rect x="251.01" y="317.07" width="2.14" height="0.90" fill="#8a8a8a"/><text transform="translate(352.60,316.07) scale(0.9200,1)" font-size="8.60" fill="#a8a8ac">Ctrl+I</text><rect x="251.60" y="321.53" width="128.00" height="0.90" fill="#e2e2e2"/><text transform="translate(251.46,332.90) scale(0.9459,1)" font-size="8.40" fill="#141420" stroke="#141420" stroke-width="0.10">Znajdź</text><rect x="251.46" y="333.90" width="4.85" height="0.90" fill="#555"/><text transform="translate(361.74,332.90) scale(0.9662,1)" font-size="8.60" fill="#141420" stroke="#141420" stroke-width="0.10">F7</text><text transform="translate(251.10,347.61) scale(0.8974,1)" font-size="8.40" fill="#141420" stroke="#141420" stroke-width="0.10">Filtruj</text><rect x="251.10" y="348.61" width="4.60" height="0.90" fill="#555"/><text transform="translate(361.74,347.61) scale(0.9569,1)" font-size="8.60" fill="#141420" stroke="#141420" stroke-width="0.10">F8</text><rect x="251.60" y="353.07" width="128.00" height="0.90" fill="#e2e2e2"/><text transform="translate(251.09,364.44) scale(0.9150,1)" font-size="8.40" fill="#a8a8ac">Przeglądaj</text><text transform="translate(361.74,364.44) scale(0.9615,1)" font-size="8.60" fill="#a8a8ac">F9</text><rect x="251.60" y="369.90" width="128.00" height="0.90" fill="#e2e2e2"/><text transform="translate(251.35,381.27) scale(0.9275,1)" font-size="8.40" fill="#141420" stroke="#141420" stroke-width="0.10">Operacje na liście</text><polygon points="369.9,374.77 373.6,377.27 369.9,379.77" fill="#000"/><g style="filter:drop-shadow(1px 2px 1.5px rgba(0,0,0,0.35))"><polygon points="211.9,281.7 231.5,277.9 230.3,273.5 249.8,282.3 230.0,290.6 231.5,286.0" fill="#f40000"/></g></svg>
<div class="r" style="left:376px;top:272px;width:146px;height:121px;border:1px solid #a8a8a8;border-top-color:#c4c4c4;background:#fcfcfc;box-shadow:1.5px 1.5px 2px rgba(0,0,0,0.35);"></div>
<svg class="r" style="left:0;top:0" width="684" height="401" font-family="Liberation Sans, sans-serif"><rect x="377.80" y="274.20" width="15.20" height="118.50" fill="#f0f0f0"/><text transform="translate(398.57,284.50) scale(0.9404,1)" font-size="8.40" fill="#141420" stroke="#141420" stroke-width="0.10">Podstawowe</text><rect x="398.57" y="285.50" width="5.27" height="0.90" fill="#555"/><polygon points="514.0,278.10 517.4,280.90 514.0,283.70" fill="#000"/><text transform="translate(398.63,299.20) scale(0.9084,1)" font-size="8.40" fill="#141420" stroke="#141420" stroke-width="0.10">Urządzenia</text><rect x="398.63" y="300.20" width="5.51" height="0.90" fill="#555"/><polygon points="514.0,292.80 517.4,295.60 514.0,298.40" fill="#000"/><text transform="translate(398.59,313.90) scale(0.9061,1)" font-size="8.40" fill="#141420" stroke="#141420" stroke-width="0.10">Miary</text><rect x="398.59" y="314.90" width="6.34" height="0.90" fill="#555"/><polygon points="514.0,307.50 517.4,310.30 514.0,313.10" fill="#000"/><text transform="translate(398.60,328.60) scale(0.8925,1)" font-size="8.40" fill="#141420" stroke="#141420" stroke-width="0.10">Parametry</text><rect x="403.60" y="329.60" width="4.17" height="0.90" fill="#555"/><polygon points="514.0,322.20 517.4,325.00 514.0,327.80" fill="#000"/><text transform="translate(398.83,343.30) scale(0.8812,1)" font-size="8.40" fill="#141420" stroke="#141420" stroke-width="0.10">Grupy</text><rect x="398.83" y="344.30" width="5.76" height="0.90" fill="#555"/><polygon points="514.0,336.90 517.4,339.70 514.0,342.50" fill="#000"/><text transform="translate(398.87,358.00) scale(0.8861,1)" font-size="8.40" fill="#141420" stroke="#141420" stroke-width="0.10">Opis</text><rect x="398.87" y="359.00" width="5.79" height="0.90" fill="#555"/><polygon points="514.0,351.60 517.4,354.40 514.0,357.20" fill="#000"/><text transform="translate(398.46,372.70) scale(0.9734,1)" font-size="8.40" fill="#141420" stroke="#141420" stroke-width="0.10">Inne</text><rect x="398.46" y="373.70" width="2.27" height="0.90" fill="#555"/><polygon points="514.0,366.30 517.4,369.10 514.0,371.90" fill="#000"/></svg>
<div class="r" style="left:377px;top:378.6px;width:142px;height:11.6px;border:2px solid #e42028;border-radius:2.5px;background:linear-gradient(#dfe8f4,#c8d8eb);"></div>
<svg class="r" style="left:0;top:0" width="684" height="401" font-family="Liberation Sans, sans-serif"><text transform="translate(398.82,389.60) scale(0.9249,1)" font-size="8.40" fill="#141420" stroke="#141420" stroke-width="0.10">Usuń zbiorczo wybrane towary</text><rect x="419.11" y="390.60" width="3.88" height="0.90" fill="#555"/></svg>
</body></html>
